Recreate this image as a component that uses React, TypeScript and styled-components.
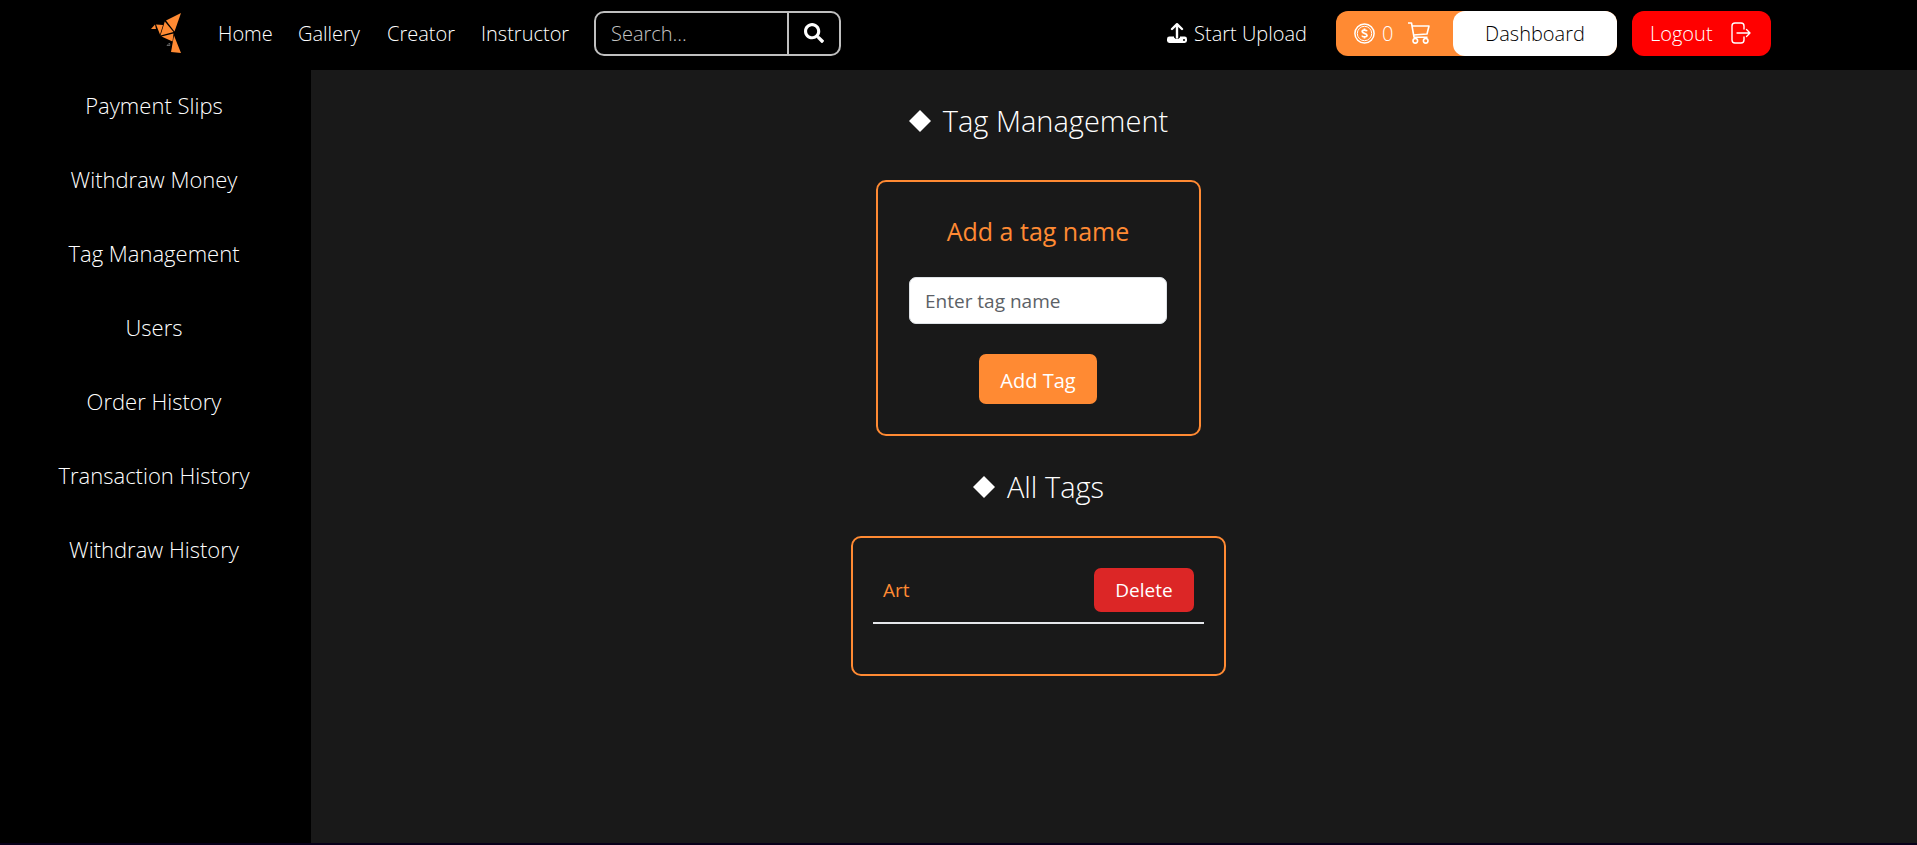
import React from 'react';
import styled, { createGlobalStyle } from 'styled-components';
import { FaSearch } from 'react-icons/fa';

const ORANGE = '#ff8a33';

const GlobalStyle = createGlobalStyle`
  *, *::before, *::after { box-sizing: border-box; }
  body {
    margin: 0;
    background: #191919;
    color: #fff;
    font-family: "Open Sans", "Noto Sans", sans-serif;
    font-size: 20px;
    font-weight: 300;
  }
  h2, ul { margin: 0; padding: 0; font-weight: inherit; }
  button, input { font: inherit; color: inherit; border: 0; margin: 0; }
  a { color: inherit; text-decoration: none; }
`;

const Page = styled.div`
  min-height: 100vh;
  display: flex;
  flex-direction: column;
`;

const Navbar = styled.header`
  height: 70px;
  padding: 0 146px 4px 150px;
  background: #000;
  display: flex;
  align-items: center;
  justify-content: space-between;
`;

const NavGroup = styled.div`
  display: flex;
  align-items: center;
`;

const LogoLink = styled.a`
  display: flex;
  margin-right: 36px;
`;

const NavLinks = styled.nav`
  display: flex;
  gap: 25px;
  margin-right: 25px;
  line-height: 28px;
  padding-top: 1px;
`;

const NavLink = styled.a<{ $width: number }>`
  width: ${(p) => p.$width}px;
  white-space: nowrap;
`;

const SearchForm = styled.form`
  display: flex;
  width: 247px;
  height: 45px;
  border: 2px solid #bfbfbf;
  border-radius: 10px;
`;

const SearchInput = styled.input`
  flex: 1;
  min-width: 0;
  padding: 1px 15px 0;
  background: transparent;
  outline: 0;
  &::placeholder { color: #c4c4c4; opacity: 1; }
`;

const SearchButton = styled.button`
  width: 52px;
  padding: 0;
  border-left: 2px solid #bfbfbf;
  background: transparent;
  display: flex;
  align-items: center;
  justify-content: center;
`;

const UploadLink = styled.a`
  display: flex;
  align-items: center;
  gap: 7px;
  margin-right: 29px;
  white-space: nowrap;
`;

const Wallet = styled.div`
  display: flex;
  height: 45px;
  border-radius: 12px;
  background: ${ORANGE};
  margin-right: 15px;
`;

const WalletInfo = styled.div`
  width: 117px;
  padding-left: 18px;
  display: flex;
  align-items: center;
`;

const Coins = styled.span`
  display: flex;
  align-items: center;
  gap: 7px;
  margin-right: 15px;
`;

const CartLink = styled.a`
  display: flex;
`;

const DashboardLink = styled.a`
  width: 164px;
  border-radius: 12px;
  background: #fff;
  color: #000;
  display: flex;
  align-items: center;
  justify-content: center;
`;

const LogoutButton = styled.button`
  width: 139px;
  height: 45px;
  padding: 0 20px 0 18px;
  border-radius: 12px;
  background: #f00;
  display: flex;
  align-items: center;
  justify-content: space-between;
`;

const Body = styled.div`
  flex: 1;
  display: flex;
`;

const Sidebar = styled.nav`
  width: 311px;
  padding: 18px 3px 0 0;
  background: #000;
  color: #fff;
  font-size: 22px;
  line-height: 34px;
  display: flex;
  flex-direction: column;
  align-items: center;
  gap: 40px;
`;

const Main = styled.main`
  flex: 1;
  padding: 30px 151px 0 0;
  display: flex;
  flex-direction: column;
  align-items: center;
`;

const Title = styled.h2`
  display: flex;
  align-items: center;
  gap: 12px;
  font-size: 29px;
  line-height: 42px;
`;

const Card = styled.form`
  width: 325px;
  margin: 38px 0 30px;
  padding: 31px 32px 30px 31px;
  border: 2px solid ${ORANGE};
  border-radius: 10px;
  display: flex;
  flex-direction: column;
  align-items: center;
`;

const CardTitle = styled.label`
  color: ${ORANGE};
  font-size: 25px;
  font-weight: 400;
  line-height: 36px;
`;

const TagInput = styled.input`
  width: 100%;
  height: 47px;
  margin: 28px 0 30px;
  padding: 0 15px;
  border: 1px solid #dee2e6;
  border-radius: 7px;
  background: #fff;
  color: #212529;
  font-size: 19px;
  font-weight: 400;
  &::placeholder { color: #5c6166; opacity: 1; }
`;

const AddButton = styled.button`
  width: 118px;
  height: 50px;
  padding: 2px 0 0;
  border-radius: 7px;
  background: ${ORANGE};
  font-size: 20px;
  font-weight: 500;
`;

const TagList = styled.ul`
  width: 375px;
  height: 140px;
  margin-top: 28px;
  padding: 30px 20px;
  border: 2px solid ${ORANGE};
  border-radius: 10px;
  list-style: none;
`;

const TagRow = styled.li`
  padding: 0 10px 10px;
  border-bottom: 2px solid #e5e7eb;
  color: ${ORANGE};
  font-size: 19px;
  font-weight: 400;
  display: flex;
  align-items: center;
  justify-content: space-between;
`;

const DeleteButton = styled.button`
  width: 100px;
  height: 44px;
  padding: 0;
  border-radius: 7px;
  background: #dc2626;
  color: #fff;
  font-weight: 500;
`;

const FooterLine = styled.footer`
  height: 2px;
  background: #08001a;
`;

const Logo = () => (
  <svg width="32" height="42" viewBox="0 0 32 42" aria-hidden="true">
    <g fill={ORANGE}>
      <path d="M1 17L5 12.5L6 17Z" />
      <path d="M6 12.5L13 13L10 22.5Z" />
      <path d="M16 8.5L31 1L24.5 19.5Z" />
      <path d="M14.8 9.5L23.5 20L10.5 23.5Z" />
      <path d="M11.5 24.6L23.5 21.6L22.5 29.5Z" />
      <path d="M24 23.5L31 41L21 40Z" />
    </g>
    <path d="M17 33.5L19.5 31L20 33.5Z" fill="none" stroke="#777" strokeWidth="0.8" />
  </svg>
);

const UploadIcon = () => (
  <svg width="20" height="20" viewBox="0 0 20 20" fill="none" aria-hidden="true">
    <rect x="0" y="13.6" width="20" height="6.4" rx="2.4" fill="#fff" />
    <path d="M7 12.5V14.5Q10 17.5 13 14.5V12.5Z" fill="#000" />
    <path d="M10 14.5V2M5 6L10 1.2L15 6" stroke="#fff" strokeWidth="2.4" strokeLinecap="round" strokeLinejoin="round" />
    <circle cx="17" cy="17" r="1" fill="#000" />
  </svg>
);

const CoinIcon = () => (
  <svg width="21" height="21" viewBox="0 0 21 21" fill="none" stroke="#fff" aria-hidden="true">
    <circle cx="10.5" cy="10.5" r="9.6" strokeWidth="1.5" />
    <circle cx="10.5" cy="10.5" r="7.2" strokeWidth="1" />
    <path d="M13 8.3C12.6 7 8.3 6.6 8.2 8.6C8.1 10.7 13 10 13 12.4C13 14.5 8.4 14.2 8 12.6M10.5 5.5V7M10.5 14V15.5" strokeWidth="1.8" />
  </svg>
);

const CartIcon = () => (
  <svg width="22" height="22" viewBox="0 0 22 22" fill="none" stroke="#fff" strokeWidth="1.6" strokeLinejoin="round" aria-hidden="true">
    <path d="M0 1H3.5L6 15.2H19.5" />
    <path d="M4 4H21L19 12L5.4 13" />
    <circle cx="7.3" cy="18.8" r="2.3" />
    <circle cx="17.7" cy="18.8" r="2.3" />
  </svg>
);

const Diamond = () => (
  <svg width="22" height="22" viewBox="0 0 22 22" fill="#fff" aria-hidden="true">
    <path d="M11 0L22 11L11 22L0 11Z" />
  </svg>
);

const LogoutIcon = () => (
  <svg width="20" height="22" viewBox="0 0 20 22" fill="none" stroke="#fff" strokeWidth="1.4" strokeLinecap="round" strokeLinejoin="round" aria-hidden="true">
    <path d="M13 7V4Q13 1 10 1H4Q1 1 1 4V18Q1 21 4 21H10Q13 21 13 18V15" />
    <path d="M6 11H19M15.5 7.5L19 11L15.5 14.5" />
  </svg>
);

const navItems = [
  { label: 'Home', width: 55 },
  { label: 'Gallery', width: 64 },
  { label: 'Creator', width: 69 },
  { label: 'Instructor', width: 88 },
];

const sideItems = [
  'Payment Slips',
  'Withdraw Money',
  'Tag Management',
  'Users',
  'Order History',
  'Transaction History',
  'Withdraw History',
];

const tags = ['Art'];

export default function App() {
  return (
    <Page>
      <GlobalStyle />
      <Navbar>
        <NavGroup>
          <LogoLink href="#" aria-label="Start page"><Logo /></LogoLink>
          <NavLinks>
            {navItems.map((item) => (
              <NavLink key={item.label} href="#" $width={item.width}>{item.label}</NavLink>
            ))}
          </NavLinks>
          <SearchForm>
            <SearchInput type="text" placeholder="Search..." aria-label="Search" />
            <SearchButton type="button" aria-label="Search"><FaSearch size={20} /></SearchButton>
          </SearchForm>
        </NavGroup>
        <NavGroup>
          <UploadLink href="#"><UploadIcon />Start Upload</UploadLink>
          <Wallet>
            <WalletInfo>
              <Coins><CoinIcon />0</Coins>
              <CartLink href="#" aria-label="Cart"><CartIcon /></CartLink>
            </WalletInfo>
            <DashboardLink href="#">Dashboard</DashboardLink>
          </Wallet>
          <LogoutButton type="button">Logout<LogoutIcon /></LogoutButton>
        </NavGroup>
      </Navbar>
      <Body>
        <Sidebar>
          {sideItems.map((label) => <a key={label} href="#">{label}</a>)}
        </Sidebar>
        <Main>
          <Title><Diamond />Tag Management</Title>
          <Card>
            <CardTitle htmlFor="tag-name">Add a tag name</CardTitle>
            <TagInput id="tag-name" type="text" placeholder="Enter tag name" />
            <AddButton type="button">Add Tag</AddButton>
          </Card>
          <Title><Diamond />All Tags</Title>
          <TagList>
            {tags.map((tag) => (
              <TagRow key={tag}>{tag}<DeleteButton type="button">Delete</DeleteButton></TagRow>
            ))}
          </TagList>
        </Main>
      </Body>
      <FooterLine />
    </Page>
  );
}
